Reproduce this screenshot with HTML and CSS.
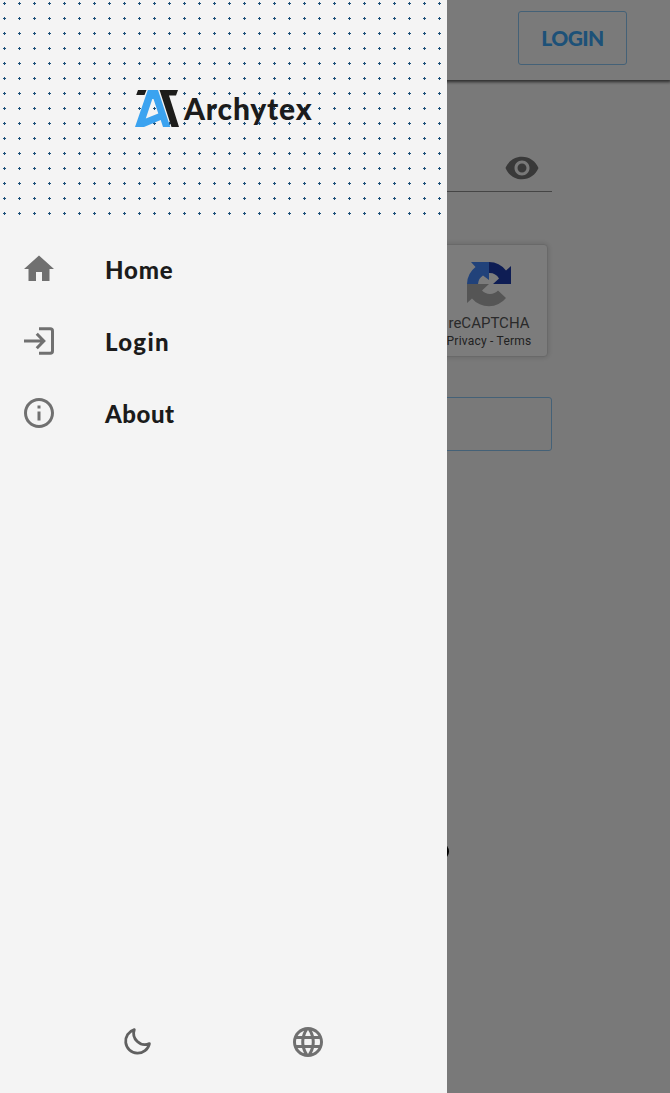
FILE: index.html
```
<!DOCTYPE html>
<html lang="en">
<head>
<meta charset="utf-8">
<title>Archytex</title>
<link rel="stylesheet" href="styles.css">
</head>
<body>
<div class="page">
  <header class="topbar"><button class="login-button">LOGIN</button></header>
  <main class="form">
    <div class="password-field">
      <svg class="icon" viewBox="0 0 24 24"><path d="M12 4.5C7 4.5 2.73 7.61 1 12c1.73 4.39 6 7.5 11 7.5s9.27-3.11 11-7.5c-1.73-4.39-6-7.5-11-7.5zM12 17c-2.76 0-5-2.24-5-5s2.240-5 5-5 5 2.240 5 5-2.240 5-5 5zm0-8c-1.660 0-3 1.340-3 3s1.340 3 3 3 3-1.340 3-3-1.340-3-3-3z"/></svg>
    </div>
    <div class="captcha">
      <div class="captcha-brand">
        <svg class="captcha-logo" viewBox="0 0 44 45">
          <path fill="#1c3aa9" d="M22 0A22 22 0 0 1 39 8.500L44 4V22H26L32 16.500A11 11 0 0 0 22 11Z"/>
          <path fill="#4285f4" d="M22 0H4L8.500 5A22 22 0 0 0 0 22H11A11 11 0 0 1 16 13.500L22 18Z"/>
          <path fill="#ababab" d="M0 22V41L5 36.500A22 22 0 0 0 39 36L31 28.500A11 11 0 0 1 15 28.500L22 22Z"/>
        </svg>
        <span class="captcha-name">reCAPTCHA</span>
        <span class="captcha-links">Privacy - Terms</span>
      </div>
    </div>
    <div class="submit"></div>
    <div class="spinner-dot"></div>
  </main>
</div>
<div class="backdrop"></div>
<aside class="drawer">
  <div class="drawer-head">
    <svg class="pattern" width="447" height="217">
      <defs><pattern id="plus" width="15" height="15" patternUnits="userSpaceOnUse"><path fill="#1b4f79" d="M4 2h1v3h-1zM3 3h3v1h-3z"/></pattern></defs>
      <rect width="447" height="217" fill="url(#plus)"/>
    </svg>
    <div class="brand">
      <svg class="mark" viewBox="0 0 44 38">
        <path fill="#1d1d1b" d="M3 0H11.500L9.500 5H1.200ZM24.500 0H43L41 5.500H34L44 37H36.500Z"/>
        <path fill="#3ba3f0" fill-rule="evenodd" d="M12.800 0H23L35.300 37H28L25.700 30L9 37H0ZM17.300 9L10.800 28.500L23.300 23.500L18.500 9Z"/>
      </svg>
      <span class="brand-name">Archytex</span>
    </div>
  </div>
  <nav class="menu">
    <a class="menu-item home"><svg class="icon" viewBox="0 0 24 24"><path d="M10 20v-6h4v6h5v-8h3L12 3 2 12h3v8z"/></svg><span>Home</span></a>
    <a class="menu-item login"><svg class="icon outline" viewBox="0 0 24 24"><path d="M2 12H15M10.500 7.200L15.200 12L10.500 16.800M12 3.800H19.500Q21 3.800 21 5.300V18.700Q21 20.200 19.500 20.200H12"/></svg><span>Login</span></a>
    <a class="menu-item about"><svg class="icon" viewBox="0 0 24 24"><path d="M11 7h2v2h-2zm0 4h2v6h-2zm1-9C6.480 2 2 6.480 2 12s4.480 10 10 10 10-4.480 10-10S17.520 2 12 2zm0 18c-4.410 0-8-3.590-8-8s3.590-8 8-8 8 3.590 8 8-3.590 8-8 8z"/></svg><span>About</span></a>
  </nav>
  <footer class="tools">
    <svg class="icon moon" viewBox="0 0 36 36"><path d="M15.300 5.600A12 12 0 1 0 30.400 19.600A11.300 11.300 0 0 1 15.300 5.600Z"/></svg>
    <svg class="icon" viewBox="0 0 24 24"><path d="M11.990 2C6.470 2 2 6.480 2 12s4.470 10 9.990 10C17.520 22 22 17.520 22 12S17.520 2 11.990 2zm6.930 6h-2.950c-.320-1.250-.780-2.450-1.380-3.560 1.840.630 3.370 1.910 4.330 3.560zM12 4.040c.830 1.200 1.480 2.530 1.910 3.960h-3.820c.430-1.430 1.080-2.760 1.910-3.960zM4.260 14C4.100 13.360 4 12.690 4 12s.100-1.360.260-2h3.380c-.080.660-.140 1.320-.140 2s.060 1.340.140 2H4.260zm.820 2h2.950c.320 1.250.780 2.450 1.380 3.560-1.840-.630-3.370-1.900-4.330-3.560zm2.950-8H5.080c.960-1.660 2.490-2.930 4.330-3.560C8.810 5.550 8.350 6.750 8.030 8zM12 19.960c-.830-1.200-1.480-2.530-1.910-3.960h3.820c-.430 1.430-1.080 2.760-1.910 3.960zM14.340 14H9.660c-.090-.660-.160-1.320-.160-2s.070-1.350.160-2h4.680c.090.650.160 1.320.160 2s-.070 1.340-.160 2zm.250 5.560c.600-1.110 1.060-2.310 1.380-3.560h2.950c-.960 1.650-2.490 2.930-4.330 3.560zM16.360 14c.080-.660.140-1.320.140-2s-.060-1.340-.140-2h3.380c.160.640.260 1.310.260 2s-.100 1.360-.260 2h-3.380z"/></svg>
  </footer>
</aside>
</body>
</html>
```
FILE: styles.css
```
* { box-sizing: border-box; }
body { margin: 0; background: #f3f3f3; font-family: Lato, "Liberation Sans", sans-serif; }
.page { height: 1093px; overflow: hidden; }
.topbar { height: 80px; padding: 11px 43px 0 0; display: flex; justify-content: flex-end; align-items: flex-start; background: #f4f4f4; box-shadow: 0 1px 3px 1px rgba(0,0,0,.65); }
.login-button { width: 109px; height: 54px; padding: 0 0 2px; border: 1px solid #88c2ee; border-radius: 3px; background: none; color: #3ba3f0; font: 900 21px Lato, sans-serif; letter-spacing: -.6px; }
.form { width: 434px; margin: 0 auto; display: flex; flex-direction: column; }
.icon { width: 36px; height: 36px; fill: #707070; flex: none; display: block; }
.password-field { height: 112px; padding: 70px 12px 0 0; display: flex; justify-content: flex-end; border-bottom: 1px solid #8b8b8b; }
.password-field .icon { fill: #737373; }
.captcha { width: 434px; height: 113px; margin: 52px 0 0 -4px; padding: 17px 14px 0; display: flex; justify-content: flex-end; background: #f9f9f9; border: 1px solid #d3d3d3; border-radius: 4px; box-shadow: 0 0 5px 1px rgba(0,0,0,.12); }
.captcha-brand { width: 88px; display: flex; flex-direction: column; align-items: center; font-family: Roboto, sans-serif; color: #555; white-space: nowrap; }
.captcha-logo { width: 44px; height: 45px; }
.captcha-name { margin-top: 7px; font-size: 15px; line-height: 19px; }
.captcha-links { font-size: 12px; line-height: 16px; letter-spacing: .22px; color: #444; }
.submit { height: 54px; margin-top: 40px; border: 1px solid #88c2ee; border-radius: 3px; }
.spinner-dot { width: 13px; height: 15px; margin: 393px 0 0 318px; border-radius: 50%; background: #000; }
.backdrop { position: absolute; inset: 0; height: 1093px; background: rgba(0,0,0,.5); }
.drawer { position: absolute; top: 0; left: 0; width: 447px; height: 1093px; display: flex; flex-direction: column; background: #f4f4f4; }
.drawer-head { position: relative; height: 217px; display: flex; justify-content: center; }
.pattern { position: absolute; inset: 0; }
.brand { position: relative; height: 38px; margin-top: 90px; display: flex; gap: 5px; }
.mark { width: 44px; height: 38px; flex: none; }
.brand-name { width: 128px; font-size: 30px; line-height: 36px; font-weight: 900; letter-spacing: .8px; color: #1b1b1b; }
.menu { padding-top: 16px; }
.menu-item { height: 72px; padding-left: 21px; display: flex; align-items: center; gap: 48px; color: #1b1b1b; font-size: 24px; line-height: 30px; font-weight: 900; }
.menu-item span { padding-top: 1px; }
.home { letter-spacing: .8px; }
.login { letter-spacing: 1.3px; }
.about { letter-spacing: .5px; }
.outline, .moon { fill: none; stroke: #707070; stroke-width: 2; }
.moon { stroke: #606060; stroke-width: 2.800; stroke-linejoin: round; }
.tools { margin-top: auto; height: 69px; padding-left: 119px; display: flex; gap: 135px; }
```
